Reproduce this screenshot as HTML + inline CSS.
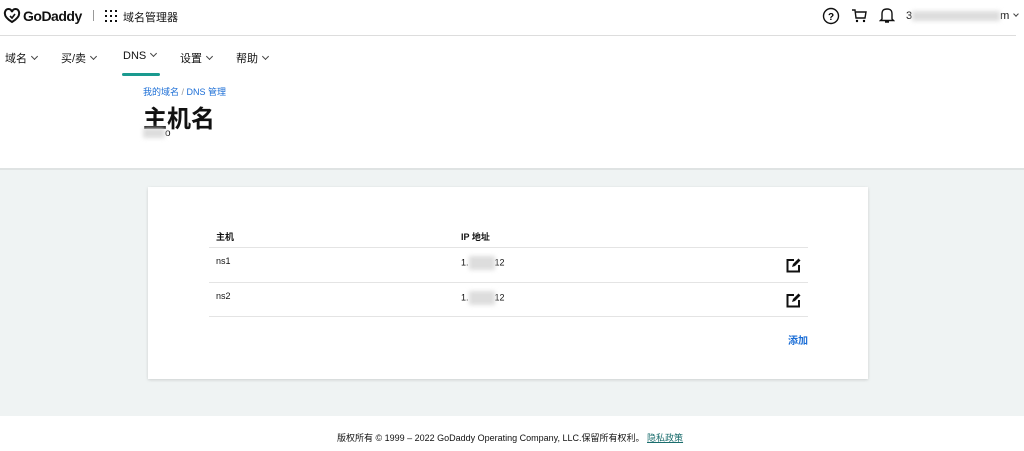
<!DOCTYPE html>
<html><head><meta charset="utf-8"><style>
*{margin:0;padding:0;box-sizing:border-box}
body{width:1024px;height:451px;overflow:hidden;background:#fff;font-family:"Liberation Sans","Noto Sans CJK SC",sans-serif;color:#111;position:relative}
.a{position:absolute;white-space:nowrap}
.blur{display:inline-block;background:#ddd;filter:blur(2px);vertical-align:middle}
.cv{display:inline-block;width:5px;height:5px;border-right:1px solid #444;border-bottom:1px solid #444;transform:rotate(45deg);margin-left:5px;vertical-align:3px}
</style></head><body>
<div class="a" style="left:0;top:0;width:1016px;height:36px;border-bottom:1px solid #ddd"></div>
<svg class="a" style="left:3px;top:7px" width="18" height="17" viewBox="0 0 18 17"><path d="M9 15C4 12 1 9 2 5 3 1 8 1 9 5 10 1 15 1 16 5 17 9 14 12 9 15Z" fill="none" stroke="#111" stroke-width="2"/><path d="M7 9 9 11 12 7" fill="none" stroke="#111" stroke-width="1.6"/></svg>
<div class="a" style="left:23px;top:8px;font-size:14px;font-weight:bold;letter-spacing:-0.5px">GoDaddy</div>
<div class="a" style="left:93px;top:10px;width:1px;height:11px;background:#999"></div>
<svg class="a" style="left:105px;top:10px" width="12" height="12"><g fill="#111"><rect x="0" y="0" width="2" height="2"/><rect x="5" y="0" width="2" height="2"/><rect x="10" y="0" width="2" height="2"/><rect x="0" y="5" width="2" height="2"/><rect x="5" y="5" width="2" height="2"/><rect x="10" y="5" width="2" height="2"/><rect x="0" y="10" width="2" height="2"/><rect x="5" y="10" width="2" height="2"/><rect x="10" y="10" width="2" height="2"/></g></svg>
<div class="a" style="left:123px;top:9px;font-size:11px">域名管理器</div>
<svg class="a" style="left:822px;top:7px" width="18" height="18"><circle cx="9" cy="9" r="7.5" fill="none" stroke="#111" stroke-width="1.4"/><text x="9" y="13" font-size="10" text-anchor="middle" font-family="Liberation Sans" font-weight="bold">?</text></svg>
<svg class="a" style="left:851px;top:8px" width="16" height="16"><path d="M1 2H4L5 10H14L15 4H5" fill="none" stroke="#111" stroke-width="1.4"/><circle cx="6" cy="13" r="1.2"/><circle cx="13" cy="13" r="1.2"/></svg>
<svg class="a" style="left:879px;top:6px" width="16" height="18"><path d="M3 13V8C3 4 5 3 8 3 11 3 13 4 13 8V13L14.5 14.5H1.5Z M6 16H10" fill="none" stroke="#111" stroke-width="1.4"/></svg>
<div class="a" style="left:906px;top:10px;font-size:11px">3<span class="blur" style="width:88px;height:10px"></span>m<span class="cv" style="width:4px;height:4px"></span></div>
<div class="a" style="left:5px;top:50px;font-size:11px">域名<span class="cv"></span></div>
<div class="a" style="left:61px;top:50px;font-size:11px">买/卖<span class="cv"></span></div>
<div class="a" style="left:123px;top:50px;font-size:11px">DNS<span class="cv"></span></div>
<div class="a" style="left:180px;top:50px;font-size:11px">设置<span class="cv"></span></div>
<div class="a" style="left:236px;top:50px;font-size:11px">帮助<span class="cv"></span></div>
<div class="a" style="left:122px;top:73px;width:38px;height:3px;background:#1a9a8f;border-radius:2px"></div>
<div class="a" style="left:143px;top:85px;font-size:9px;color:#1a6dd6">我的域名 <span style="color:#999">/</span> DNS 管理</div>
<div class="a" style="left:143px;top:99px;font-size:24px;font-weight:bold">主机名</div>
<div class="a" style="left:143px;top:128px;font-size:10px"><span class="blur" style="width:22px;height:10px"></span>o</div>
<div class="a" style="left:0;top:168px;width:1024px;height:248px;background:#eff3f3;border-top:2px solid #dfe3e3"></div>
<div class="a" style="left:148px;top:187px;width:720px;height:192px;background:#fff;box-shadow:0 1px 3px rgba(0,0,0,.15)"></div>
<div class="a" style="left:216px;top:230px;font-size:9px;font-weight:bold">主机</div>
<div class="a" style="left:461px;top:230px;font-size:9px;font-weight:bold">IP 地址</div>
<div class="a" style="left:209px;top:247px;width:599px;height:1px;background:#e4e4e4"></div>
<div class="a" style="left:216px;top:256px;font-size:9px">ns1</div>
<div class="a" style="left:461px;top:256px;font-size:9px">1.<span class="blur" style="width:26px;height:14px"></span>12</div>
<div class="a" style="left:209px;top:282px;width:599px;height:1px;background:#e4e4e4"></div>
<div class="a" style="left:216px;top:291px;font-size:9px">ns2</div>
<div class="a" style="left:461px;top:291px;font-size:9px">1.<span class="blur" style="width:26px;height:14px"></span>12</div>
<div class="a" style="left:209px;top:316px;width:599px;height:1px;background:#e4e4e4"></div>
<svg class="a" style="left:786px;top:258px" width="15" height="15"><path d="M8 2H1.5V13.5H13V7" fill="none" stroke="#111" stroke-width="2"/><path d="M6 9 7 6 12.5 0.5 14.5 2.5 9 8Z" fill="#111"/></svg>
<svg class="a" style="left:786px;top:293px" width="15" height="15"><path d="M8 2H1.5V13.5H13V7" fill="none" stroke="#111" stroke-width="2"/><path d="M6 9 7 6 12.5 0.5 14.5 2.5 9 8Z" fill="#111"/></svg>
<div class="a" style="left:788px;top:332px;font-size:10px;color:#1a6dd6;font-weight:bold">添加</div>
<div class="a" style="left:0;top:431px;width:1020px;text-align:center;font-size:9px">版权所有 © 1999 – 2022 GoDaddy Operating Company, LLC.保留所有权利。 <span style="color:#1a6d6d;text-decoration:underline">隐私政策</span></div>
</body></html>
